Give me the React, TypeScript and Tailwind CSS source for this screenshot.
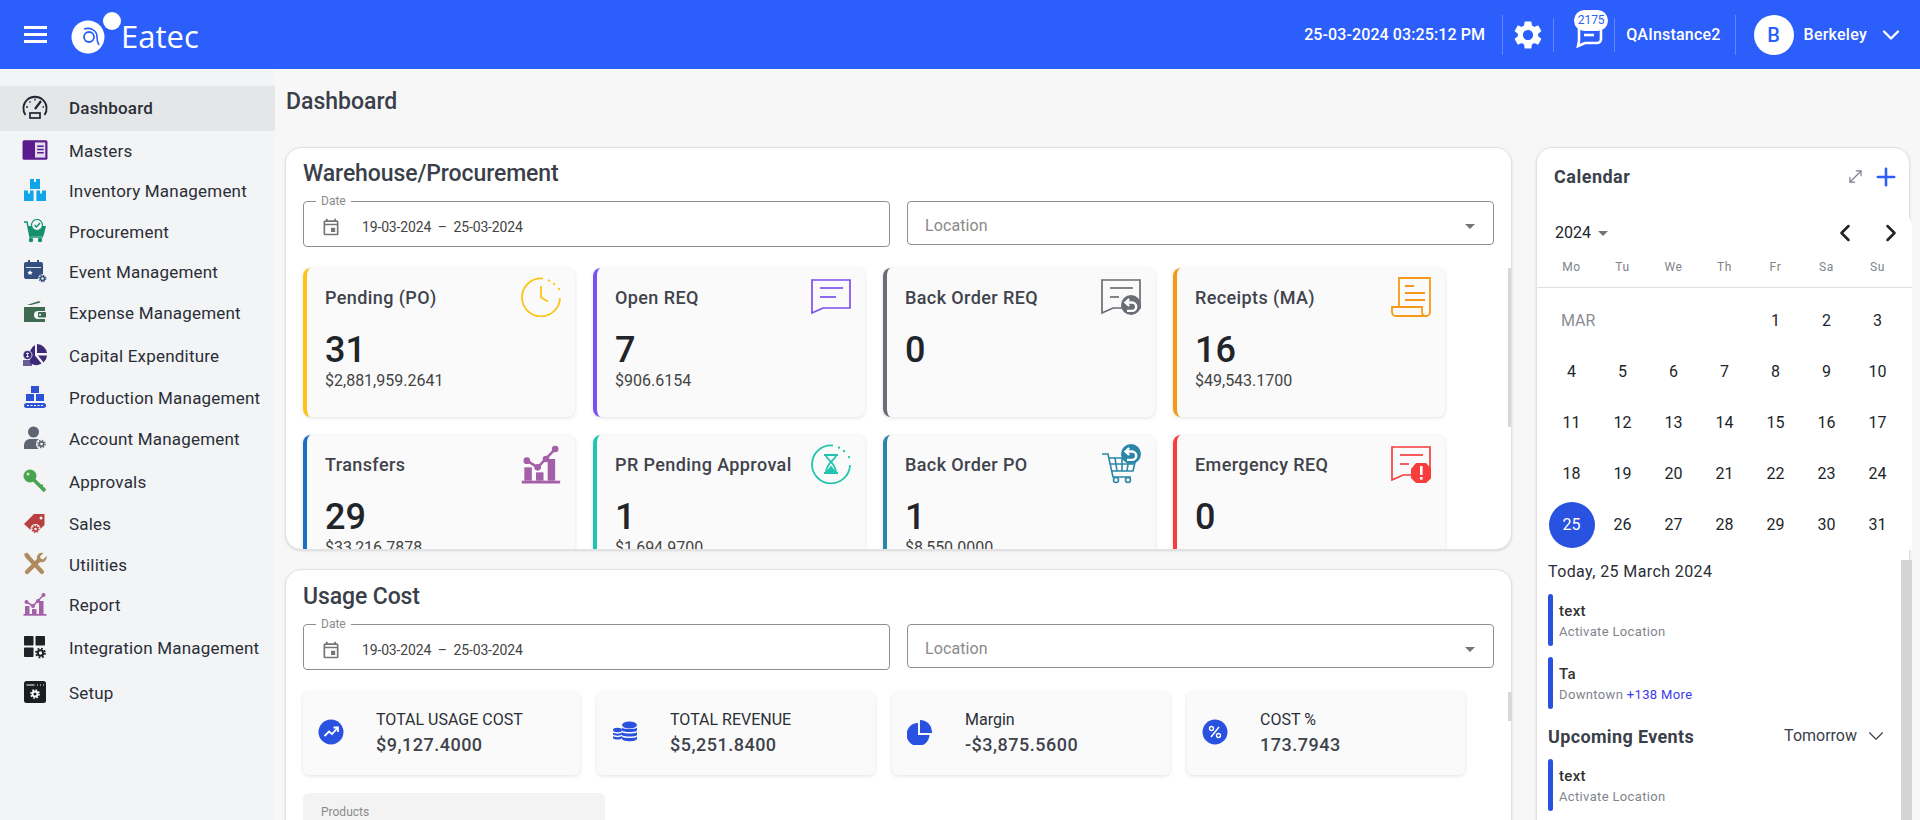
import React from 'react';
import { ChevronDown, ChevronLeft, ChevronRight, MoveDiagonal, Plus } from 'lucide-react';
import { MdOutlineEvent, MdSettings, MdArrowDropDown } from 'react-icons/md';

type IconProps = { className?: string };

const Gear = ({ cx, cy, r, color }: { cx: number; cy: number; r: number; color: string }) => {
  const ring = 2 * Math.PI * r * 0.9;
  return (
    <g fill="none" stroke={color}>
      <circle cx={cx} cy={cy} r={r * 0.9} strokeWidth={r * 0.36} strokeDasharray={`${ring / 16} ${ring / 16}`} />
      <circle cx={cx} cy={cy} r={r * 0.55} strokeWidth={r * 0.42} />
    </g>
  );
};

const UndoBadge = ({ cx, cy, r, color }: { cx: number; cy: number; r: number; color: string }) => (
  <g>
    <circle cx={cx} cy={cy} r={r} fill={color} />
    <path
      d={`M${cx - r * 0.5} ${cy - r * 0.25}h${r * 0.6}a${r * 0.42} ${r * 0.42} 0 0 1 0 ${r * 0.84}h${-r * 0.5}M${cx - r * 0.18} ${cy - r * 0.6}L${cx - r * 0.55} ${cy - r * 0.25}L${cx - r * 0.18} ${cy + r * 0.1}`}
      fill="none"
      stroke="#fff"
      strokeWidth={r * 0.24}
    />
  </g>
);

const ChartBars = ({ color }: { color: string }) => (
  <g fill={color}>
    <rect x="0.500" y="22" width="23" height="1.700" />
    <rect x="2" y="14" width="4.500" height="8" />
    <rect x="9" y="17" width="4.500" height="5" />
    <rect x="16" y="9" width="4.500" height="13" />
    <path d="M3.500 10L10 14L20 3.500" fill="none" stroke={color} strokeWidth="1.500" />
    <circle cx="3.500" cy="10" r="2" />
    <circle cx="10" cy="14" r="2" />
    <circle cx="15" cy="9" r="2" />
    <circle cx="20.500" cy="3" r="2" />
  </g>
);

const navIcons: Record<string, React.FC<IconProps>> = {
  gauge: ({ className }) => (
    <svg viewBox="0 0 26 24" className={className}>
      <path d="M3.500 20A11.600 11.600 0 1 1 22.500 20" fill="none" stroke="#1f2430" strokeWidth="1.800" />
      <path d="M13 14L19 6" stroke="#1f2430" strokeWidth="2.200" />
      <path d="M4 12h2M7.500 6.500l1 1M13 3.500v2M20.500 12h1.500" stroke="#1f2430" strokeWidth="1.400" />
      <rect x="8" y="18" width="10" height="5" fill="none" stroke="#1f2430" strokeWidth="1.700" />
    </svg>
  ),
  book: ({ className }) => (
    <svg viewBox="0 0 24 20" className={className}>
      <rect x="0.500" y="1" width="23" height="18" rx="1.500" fill="#5c1a8f" />
      <rect x="12" y="3" width="9.500" height="14" fill="#e3dcec" />
      <path d="M14 6.500h6M14 9.500h6M14 12.500h6" stroke="#5c1a8f" strokeWidth="1.300" />
    </svg>
  ),
  boxes: ({ className }) => (
    <svg viewBox="0 0 24 24" className={className} fill="#0ea5e9">
      <path d="M7 1h4v3h2V1h4v10H7z" />
      <path d="M1 12.500h4v3h2v-3h3.600V23H1z" />
      <path d="M13.400 12.500H17v3h2v-3h4V23h-9.600z" />
    </svg>
  ),
  cart: ({ className }) => (
    <svg viewBox="0 0 24 24" className={className}>
      <path d="M1 3h3l3 15h13" fill="none" stroke="#14906f" strokeWidth="1.400" />
      <path d="M5 7h18l-2.500 10H7z" fill="#14906f" />
      <circle cx="14" cy="6" r="5.500" fill="#f3f4f6" stroke="#14906f" strokeWidth="1.200" />
      <path d="M11.500 6l2 2 3.500-4" fill="none" stroke="#14906f" strokeWidth="1.500" />
      <circle cx="8" cy="21" r="2.200" fill="#14906f" />
      <circle cx="17" cy="21" r="2.200" fill="#14906f" />
    </svg>
  ),
  event: ({ className }) => (
    <svg viewBox="0 0 24 24" className={className}>
      <rect x="1" y="3" width="19" height="17" rx="2" fill="#33507f" />
      <rect x="3" y="8" width="15" height="10" fill="#dbe3f0" />
      <rect x="5" y="1" width="2" height="4" fill="#33507f" />
      <rect x="14" y="1" width="2" height="4" fill="#33507f" />
      <rect x="3" y="9" width="15" height="9" fill="#33507f" />
      <path d="M7 11l.9 1.700 1.900.2-1.400 1.300.4 1.800-1.800-.9-1.700.9.4-1.800-1.400-1.300 1.900-.2z" fill="#fff" />
      <circle cx="19.500" cy="19.500" r="4.300" fill="#f3f4f6" />
      <Gear cx={19.500} cy={19.500} r={3.600} color="#33507f" />
    </svg>
  ),
  wallet: ({ className }) => (
    <svg viewBox="0 0 24 24" className={className}>
      <path d="M4 5l12-4 1.500 1.500L8 5z" fill="#3e6b52" />
      <path d="M1 7h21v4H15a4 4 0 0 0 0 8h7v3H1z" fill="#3e6b52" />
      <rect x="15" y="12" width="8" height="5.500" rx="1" fill="#3e6b52" />
      <circle cx="17" cy="14.800" r="1" fill="#fff" />
    </svg>
  ),
  pie: ({ className }) => (
    <svg viewBox="0 0 26 24" className={className}>
      <path d="M15 1a10.500 10.500 0 0 1 10 9H15z" fill="#3c2a78" />
      <path d="M13 2v10.500l6.500 8A10.500 10.500 0 0 1 8 20V8a10.500 10.500 0 0 1 5-6z" fill="#3c2a78" />
      <path d="M16 12.500h9a10 10 0 0 1-3.500 7z" fill="#3c2a78" />
      <circle cx="5.500" cy="12" r="4.500" fill="#3c2a78" stroke="#f3f4f6" strokeWidth="0.800" />
      <path d="M4 10.500h3M4 13.500h3M5.500 9.500v5" stroke="#fff" strokeWidth="0.800" />
      <path d="M1 18h9M1 20h9M1 22h9" stroke="#3c2a78" strokeWidth="1.500" />
    </svg>
  ),
  production: ({ className }) => (
    <svg viewBox="0 0 24 24" className={className}>
      <rect x="8" y="1" width="8" height="7" fill="#2d52d8" />
      <rect x="3" y="9" width="8" height="7" fill="#2d52d8" />
      <rect x="13" y="9" width="8" height="7" fill="#2d52d8" />
      <rect x="1" y="18" width="22" height="5" rx="2.500" fill="#2d52d8" />
      <path d="M4 20.500h16" stroke="#fff" strokeWidth="1" strokeDasharray="2 1.500" />
    </svg>
  ),
  account: ({ className }) => (
    <svg viewBox="0 0 24 24" className={className}>
      <circle cx="10.500" cy="6" r="5.500" fill="#5e6470" />
      <path d="M1 23v-4a6 6 0 0 1 6-6h7a6 6 0 0 1 5 2l-4 8z" fill="#5e6470" />
      <circle cx="18.500" cy="18" r="5.500" fill="#f3f4f6" />
      <Gear cx={18.500} cy={18} r={4} color="#5e6470" />
    </svg>
  ),
  key: ({ className }) => (
    <svg viewBox="0 0 24 24" className={className}>
      <circle cx="7" cy="7" r="6.500" fill="#4aa34e" />
      <circle cx="5" cy="5" r="1.500" fill="#c9e8ca" />
      <path d="M10 10l12 12" stroke="#4aa34e" strokeWidth="3.500" />
      <path d="M17 17l3-1M20 20l2-1" stroke="#4aa34e" strokeWidth="1.500" />
    </svg>
  ),
  tag: ({ className }) => (
    <svg viewBox="0 0 24 24" className={className}>
      <path d="M1 13L11 3h10.500v11L12 23z" fill="#b84040" />
      <circle cx="18" cy="7" r="1.500" fill="#f3f4f6" />
      <circle cx="12.500" cy="18" r="5" fill="#f3f4f6" />
      <Gear cx={12.500} cy={18} r={3.800} color="#b84040" />
    </svg>
  ),
  tools: ({ className }) => (
    <svg viewBox="0 0 24 24" className={className}>
      <path d="M4 4l15 16" stroke="#ae8c60" strokeWidth="4.200" strokeLinecap="round" />
      <path d="M1 2l3-1.500 3 3-2 2-3-1z" fill="#ae8c60" />
      <path d="M4 20L16 8" stroke="#ae8c60" strokeWidth="4.400" strokeLinecap="round" />
      <path d="M14 7a5 5 0 0 1 6.500-6L17 4.500l.7 2.300 2.300.7 3.500-3.500A5 5 0 0 1 17 10z" fill="#ae8c60" />
    </svg>
  ),
  report: ({ className }) => (
    <svg viewBox="0 0 24 24" className={className}>
      <ChartBars color="#a45fa8" />
    </svg>
  ),
  integration: ({ className }) => (
    <svg viewBox="0 0 24 24" className={className}>
      <rect x="1" y="1" width="9.500" height="9.500" rx="0.800" fill="#1e2126" />
      <rect x="12.500" y="1" width="9.500" height="9.500" rx="0.800" fill="#1e2126" />
      <rect x="1" y="12.500" width="9.500" height="9.500" rx="0.800" fill="#1e2126" />
      <Gear cx={17.500} cy={18} r={5} color="#1e2126" />
    </svg>
  ),
  setup: ({ className }) => (
    <svg viewBox="0 0 24 24" className={className}>
      <rect x="1" y="1" width="22" height="22" rx="2.500" fill="#1b1d22" />
      <path d="M3.500 5h8M14 5h1M17 5h1M20 5h1" stroke="#fff" strokeWidth="1.200" />
      <Gear cx={12} cy={14} r={4.500} color="#fff" />
    </svg>
  ),
};

const navItems = [
  { label: 'Dashboard', icon: 'gauge', size: 'h-[45px]', active: true },
  { label: 'Masters', icon: 'book', size: 'h-[40px]' },
  { label: 'Inventory Management', icon: 'boxes', size: 'h-[40px]' },
  { label: 'Procurement', icon: 'cart', size: 'h-[42px]' },
  { label: 'Event Management', icon: 'event', size: 'h-[38px]' },
  { label: 'Expense Management', icon: 'wallet', size: 'h-[44px]' },
  { label: 'Capital Expenditure', icon: 'pie', size: 'h-[42px]' },
  { label: 'Production Management', icon: 'production', size: 'h-[42px]' },
  { label: 'Account Management', icon: 'account', size: 'h-[40px]' },
  { label: 'Approvals', icon: 'key', size: 'h-[46px]' },
  { label: 'Sales', icon: 'tag', size: 'h-[38px]' },
  { label: 'Utilities', icon: 'tools', size: 'h-[44px]' },
  { label: 'Report', icon: 'report', size: 'h-[36px]' },
  { label: 'Integration Management', icon: 'integration', size: 'h-[50px]' },
  { label: 'Setup', icon: 'setup', size: 'h-[40px]' },
];

const ChatShape = ({ color, lines = 2 }: { color: string; lines?: number }) => (
  <g fill="none" stroke={color} strokeWidth="1.700">
    <path d="M1 3h38v28H12l-11 5z" />
    <path d="M9 11h23" />
    <path d={lines === 2 ? 'M9 20h16' : 'M9 20h9'} />
  </g>
);

const statIcons: Record<string, React.ReactNode> = {
  clock: (
    <svg viewBox="0 0 40 40" className="w-10 h-10" fill="none" stroke="#fcc419" strokeWidth="1.800">
      <path d="M22 1.500A19 19 0 1 0 39 21" />
      <path d="M20 9v11.500l7 4" strokeWidth="1.800" />
      <path d="M28 3.500l.1.1M33 7l.1.1M38 12l.1.1" strokeWidth="2.200" strokeLinecap="round" />
    </svg>
  ),
  chat: (
    <svg viewBox="0 0 40 40" className="w-10 h-10">
      <ChatShape color="#7b4ff0" />
    </svg>
  ),
  backChat: (
    <svg viewBox="0 0 40 40" className="w-10 h-10">
      <ChatShape color="#6b6d76" lines={1} />
      <UndoBadge cx={30} cy={28} r={10} color="#6b6d76" />
    </svg>
  ),
  receipt: (
    <svg viewBox="0 0 40 40" className="w-10 h-10" fill="none" stroke="#f59a16" strokeWidth="1.800">
      <path d="M8 30V1h31v34a4 4 0 0 1-8 0v-5H1v5a4 4 0 0 0 4 4h30" />
      <path d="M14 9h9M14 16h20M14 23h20" strokeWidth="2.200" />
    </svg>
  ),
  transfers: (
    <svg viewBox="0 0 24 24" className="w-10 h-10">
      <ChartBars color="#a45fa8" />
    </svg>
  ),
  hourglass: (
    <svg viewBox="0 0 40 40" className="w-10 h-10" fill="none" stroke="#21c4ae" strokeWidth="1.800">
      <path d="M22 1.500A19 19 0 1 0 39 21" />
      <path d="M13 11h14M13 29h14" strokeWidth="2.200" />
      <path d="M15 11c0 5 10 7 10 18M25 11c0 5-10 7-10 18" strokeWidth="1.800" />
      <path d="M16 28l4-5 4 5z" fill="#21c4ae" />
      <path d="M28 3.500l.1.1M33 7l.1.1M38 13l.1.1" strokeWidth="2.200" strokeLinecap="round" />
    </svg>
  ),
  backCart: (
    <svg viewBox="0 0 40 40" className="w-10 h-10">
      <g fill="none" stroke="#2a86a6" strokeWidth="1.600">
        <path d="M1 10h6l5 23h18" />
        <path d="M8 14h27l-3 13H11" />
        <path d="M14 14l2 13M21 14v13M28 14l-2 13M10 20h24" />
        <circle cx="15" cy="36" r="2.500" />
        <circle cx="27" cy="36" r="2.500" />
      </g>
      <UndoBadge cx={30} cy={10} r={10} color="#2a86a6" />
    </svg>
  ),
  alert: (
    <svg viewBox="0 0 40 40" className="w-10 h-10">
      <ChatShape color="#f83d3d" lines={1} />
      <path d="M25 19h10l5.500 6v9l-5.500 5H25l-5-5v-9z" fill="#f83d3d" />
      <rect x="29" y="22" width="2.600" height="9" fill="#fff" />
      <rect x="29" y="33" width="2.600" height="2.600" fill="#fff" />
    </svg>
  ),
};

const warehouseStats = [
  { label: 'Pending (PO)', value: '31', amount: '$2,881,959.2641', icon: 'clock', bar: 'border-l-[#fcc419]' },
  { label: 'Open REQ', value: '7', amount: '$906.6154', icon: 'chat', bar: 'border-l-[#7b4ff0]' },
  { label: 'Back Order REQ', value: '0', amount: '', icon: 'backChat', bar: 'border-l-[#6b6d76]' },
  { label: 'Receipts (MA)', value: '16', amount: '$49,543.1700', icon: 'receipt', bar: 'border-l-[#f59a16]' },
  { label: 'Transfers', value: '29', amount: '$33,216.7878', icon: 'transfers', bar: 'border-l-[#1b6fc0]' },
  { label: 'PR Pending Approval', value: '1', amount: '$1,694.9700', icon: 'hourglass', bar: 'border-l-[#21c4ae]' },
  { label: 'Back Order PO', value: '1', amount: '$8,550.0000', icon: 'backCart', bar: 'border-l-[#2a86a6]' },
  { label: 'Emergency REQ', value: '0', amount: '', icon: 'alert', bar: 'border-l-[#f83d3d]' },
];

const summaryIcons: Record<string, React.ReactNode> = {
  trend: (
    <svg viewBox="0 0 26 26" className="w-[26px] h-[26px]">
      <circle cx="13" cy="13" r="12.500" fill="#2a52e0" />
      <path d="M6.500 17l4.500-4.500 3 2.500 5.500-6M15.500 8.500h4.500V13" fill="none" stroke="#fff" strokeWidth="1.800" />
    </svg>
  ),
  coins: (
    <svg viewBox="0 0 26 26" className="w-[26px] h-[26px]" fill="#2a52e0">
      <ellipse cx="17.500" cy="6" rx="7.500" ry="3.500" />
      <path d="M10 8.500c1 2 14 2 15 0v3c-1 2-14 2-15 0zM10 13c1 2 14 2 15 0v3c-1 2-14 2-15 0zM10 17.500c1 2 14 2 15 0v2.500c-1 3-14 3-15 0z" />
      <ellipse cx="5.500" cy="11" rx="4.500" ry="2.200" />
      <path d="M1 13.500c1 1.500 8 1.500 9 0v2c-1 1.500-8 1.500-9 0zM1 17c1 1.500 8 1.500 9 0v2c-1 2-8 2-9 0z" />
    </svg>
  ),
  pie: (
    <svg viewBox="0 0 26 26" className="w-[26px] h-[26px]" fill="#2a52e0">
      <path d="M11 4v12h11.500A11.500 11.500 0 1 1 11 4z" />
      <path d="M13 1a12 12 0 0 1 12 13H13z" />
    </svg>
  ),
  percent: (
    <svg viewBox="0 0 26 26" className="w-[26px] h-[26px]">
      <circle cx="13" cy="13" r="12.500" fill="#2a52e0" />
      <path d="M17 8l-8 10" stroke="#fff" strokeWidth="1.500" />
      <circle cx="9.500" cy="9.500" r="2" fill="none" stroke="#fff" strokeWidth="1.300" />
      <circle cx="16.500" cy="16.500" r="2" fill="none" stroke="#fff" strokeWidth="1.300" />
    </svg>
  ),
};

const usageStats = [
  { label: 'TOTAL USAGE COST', value: '$9,127.4000', icon: 'trend' },
  { label: 'TOTAL REVENUE', value: '$5,251.8400', icon: 'coins' },
  { label: 'Margin', value: '-$3,875.5600', icon: 'pie' },
  { label: 'COST %', value: '173.7943', icon: 'percent' },
];

const weekDays = ['Mo', 'Tu', 'We', 'Th', 'Fr', 'Sa', 'Su'];
const marchDays = Array.from({ length: 31 }, (_, i) => i + 1);

const Filters = () => (
  <div className="flex items-start gap-[17px]">
    <div className="relative w-[587px] h-[46px] border border-[#8e8e8e] rounded-[4px] flex items-center pl-[17px] pt-[6px]">
      <span className="absolute -top-[9px] left-[12px] bg-white px-[5px] text-[12px] leading-[16px] text-[#8a8a8a]">Date</span>
      <MdOutlineEvent className="w-5 h-5 text-[#757575]" />
      <span className="ml-[21px] text-[14px] text-[#444] tracking-[-0.15px] whitespace-pre">19-03-2024  –  25-03-2024</span>
    </div>
    <div className="w-[587px] h-[44px] border border-[#8e8e8e] rounded-[4px] flex items-center justify-between pl-[17px] pr-[11px] pt-[5px]">
      <span className="text-[16px] text-[#8a8a8a] tracking-[0.1px]">Location</span>
      <MdArrowDropDown className="w-6 h-6 text-[#757575]" />
    </div>
  </div>
);

const EventRow = ({ title, children }: { title: string; children: React.ReactNode }) => (
  <div className="h-[52px] flex">
    <div className="w-[5px] bg-[#2a52e0] rounded-[3px]" />
    <div className="pl-[6px] pt-[7px]">
      <div className="text-[15px] leading-[20px] font-medium text-[#333] tracking-[0.3px]">{title}</div>
      <div className="text-[13px] leading-[20px] mt-[1px] text-[#80848c] tracking-[0.35px]">{children}</div>
    </div>
  </div>
);

const App: React.FC = () => {
  return (
    <div className="w-[1920px] h-[820px] overflow-hidden flex flex-col bg-[#f7f7f7] font-['Roboto',sans-serif] text-[#212529]">
      <header className="h-[69px] shrink-0 bg-[#2c5efb] flex items-center text-white">
        <div className="ml-[24px] w-[23px] flex flex-col gap-[4.5px]">
          <span className="h-[2.5px] bg-white" />
          <span className="h-[2.5px] bg-white" />
          <span className="h-[2.5px] bg-white" />
        </div>
        <svg viewBox="0 0 54 44" className="w-[54px] h-[44px] ml-[24px] -mt-[5px]">
          <circle cx="17" cy="27" r="16.500" fill="#fff" />
          <circle cx="41" cy="11" r="9" fill="#fff" />
          <circle cx="18" cy="27" r="5" fill="none" stroke="#2c5efb" strokeWidth="1.800" />
          <path d="M13 19C19 17 26 20 26 27C26 30 26 32 28 35" fill="none" stroke="#2c5efb" strokeWidth="1.600" />
        </svg>
        <span className="ml-[-4px] mt-[4px] text-[31px] font-normal font-['Open_Sans',sans-serif] leading-none">Eatec</span>

        <div className="ml-auto flex items-center pr-[15px]">
          <span className="text-[16px] font-medium tracking-[0.1px] mr-[17px]">25-03-2024 03:25:12 PM</span>
          <span className="w-px h-[40px] bg-white/25" />
          <MdSettings className="w-[34px] h-[34px] mx-[8px]" />
          <span className="w-px h-[34px] bg-white/25" />
          <div className="relative w-[60px] h-[34px] flex items-center justify-center">
            <svg viewBox="0 0 28 28" className="w-[28px] h-[28px] ml-[10px]" fill="none" stroke="#fff" strokeWidth="2.600">
              <path d="M6 6h16a4 4 0 0 1 4 4v8a4 4 0 0 1-4 4H10l-7 3 1-5V8z" />
              <path d="M9 14h10" />
            </svg>
            <span className="absolute -top-[8px] left-[20px] w-[34px] h-[21px] rounded-full bg-white text-[#2c5efb] text-[12px] leading-[21px] text-center">2175</span>
          </div>
          <span className="w-px h-[34px] bg-white/25" />
          <span className="ml-[11px] mr-[14px] text-[16px] font-medium tracking-[0.2px]">QAInstance2</span>
          <span className="w-px h-[40px] bg-white/25" />
          <span className="ml-[18px] w-[40px] h-[40px] rounded-full bg-white text-[#2c5efb] font-medium text-[20px] flex items-center justify-center">B</span>
          <span className="ml-[10px] text-[16px] font-medium tracking-[0.25px]">Berkeley</span>
          <ChevronDown className="ml-[10px] w-[28px] h-[28px]" strokeWidth={2} />
        </div>
      </header>

      <div className="flex flex-1 min-h-0">
        <aside className="w-[275px] shrink-0 bg-[#f3f4f6] pt-[17px]">
          {navItems.map((item) => {
            const Icon = navIcons[item.icon];
            return (
              <div key={item.label} className={`${item.size} flex items-center pl-[22px] ${item.active ? 'bg-[#e5e6e8]' : 'pt-[2px]'}`}>
                <Icon className="w-[26px] h-[24px] -mt-[4px]" />
                <span className={`ml-[21px] text-[17px] tracking-[0.2px] text-[#2a2e36] ${item.active ? 'font-medium' : ''}`}>{item.label}</span>
              </div>
            );
          })}
        </aside>

        <main className="flex-1 min-w-0 pl-[10px]">
          <h1 className="h-[78px] pt-[19px] pl-px text-[23px] leading-[28px] font-medium text-[#3a3f4a]">Dashboard</h1>
          <div className="flex gap-[24px]">
            <div className="w-[1227px] flex flex-col gap-[19px]">
              <section className="h-[403px] bg-white border border-[#e2e2e2] rounded-[16px] shadow-sm overflow-hidden pt-[11px] pl-[17px] flex flex-col">
                <h2 className="h-[30px] mb-[12px] text-[23px] leading-[30px] font-medium text-[#3a3f4a] tracking-[-0.1px]">Warehouse/Procurement</h2>
                <Filters />
                <div className="relative mt-[21px] flex-1 min-h-0">
                  <div className="grid grid-cols-[repeat(4,272px)] gap-x-[18px] gap-y-[18px]">
                    {warehouseStats.map((stat) => (
                      <div key={stat.label} className={`relative h-[149px] bg-[#fafafa] rounded-[8px] border-l-4 ${stat.bar} shadow-[0_1px_4px_rgba(0,0,0,0.12)] pl-[18px] pt-[18px]`}>
                        <div className="text-[18px] leading-[24px] font-medium text-[#3f434c] tracking-[0.4px]">{stat.label}</div>
                        <div className="mt-[20px] text-[36px] leading-[40px] font-medium text-[#212529]">{stat.value}</div>
                        <div className="mt-[1px] text-[16px] leading-[20px] text-[#444]">{stat.amount}</div>
                        <div className="absolute top-[9px] right-[14px]">{statIcons[stat.icon]}</div>
                      </div>
                    ))}
                  </div>
                  <div className="absolute top-0 left-[1205px] w-[4px] h-[159px] bg-[#d8d8d8]" />
                </div>
              </section>

              <section className="relative h-[300px] bg-white border border-[#e2e2e2] rounded-[16px] shadow-sm pt-[12px] pl-[17px]">
                <h2 className="h-[30px] mb-[12px] text-[23px] leading-[30px] font-medium text-[#3a3f4a] tracking-[-0.1px]">Usage Cost</h2>
                <Filters />
                <div className="relative mt-[22px]">
                  <div className="grid grid-cols-[277px_278px_278px_278px] gap-x-[17px]">
                    {usageStats.map((stat) => (
                      <div key={stat.label} className="h-[83px] bg-[#fafafa] rounded-[6px] shadow-[0_1px_4px_rgba(0,0,0,0.12)] flex items-center pl-[15px]">
                        <div className="w-[26px] h-[26px] -mt-[4px]">{summaryIcons[stat.icon]}</div>
                        <div className="ml-[32px] -mt-[2px]">
                          <div className="text-[16px] leading-[24px] text-[#2a2e36]">{stat.label}</div>
                          <div className="text-[18px] leading-[26px] font-medium text-[#3f434c] tracking-[0.5px]">{stat.value}</div>
                        </div>
                      </div>
                    ))}
                  </div>
                  <div className="absolute top-0 left-[1205px] w-[4px] h-[29px] bg-[#d8d8d8]" />
                </div>
                <div className="mt-[18px] w-[302px] h-[60px] bg-[#f3f3f3] rounded-[6px] pl-[18px] pt-[11px] text-[12px] leading-[16px] text-[#8a8a8a]">Products</div>
              </section>
            </div>

            <section className="relative w-[374px] h-[700px] bg-white border border-[#e2e2e2] rounded-[16px] shadow-sm">
              <div className="flex items-center justify-between pt-[17px] pl-[17px] pr-[9px] h-[40px]">
                <h3 className="text-[18px] leading-[24px] font-bold text-[#3a3f4a] tracking-[0.5px]">Calendar</h3>
                <div className="flex items-center gap-[7px]">
                  <MoveDiagonal className="w-[19px] h-[19px] text-[#7b7f8a]" strokeWidth={1.5} />
                  <Plus className="w-[28px] h-[28px] text-[#2c5efb]" strokeWidth={2.2} />
                </div>
              </div>

              <div className="relative mt-[27px] -mr-[3px] pl-[9px] bg-white rounded-tr-[10px]">
                <div className="flex items-center justify-between h-[34px] pl-[9px] pr-[7px] pt-[2px]">
                  <div className="flex items-center">
                    <span className="text-[16px] text-[#212529]">2024</span>
                    <MdArrowDropDown className="w-6 h-6 text-[#757575]" />
                  </div>
                  <div className="flex items-center gap-[18px] text-[#212529]">
                    <ChevronLeft className="w-[28px] h-[28px]" strokeWidth={2.2} />
                    <ChevronRight className="w-[28px] h-[28px]" strokeWidth={2.2} />
                  </div>
                </div>
                <div className="grid grid-cols-[repeat(7,51px)] h-[38px] items-center pb-[2px]">
                  {weekDays.map((day) => (
                    <span key={day} className="text-center text-[12px] text-[#7f8389] tracking-[0.7px]">{day}</span>
                  ))}
                </div>
                <div className="-ml-[9px] h-px bg-[#dfdfdf]" />
                <div className="grid grid-cols-[repeat(7,51px)] auto-rows-[51px] mt-[7px] items-center justify-items-center text-[16px] text-[#212529]">
                  <span className="col-span-4 justify-self-start pl-[15px] text-[#8a8d93]">MAR</span>
                  {marchDays.map((day) =>
                    day === 25 ? (
                      <span key={day} className="w-[46px] h-[46px] rounded-full bg-[#2a52e0] text-white flex items-center justify-center">{day}</span>
                    ) : (
                      <span key={day}>{day}</span>
                    ),
                  )}
                </div>
              </div>

              <div className="pl-[11px] pr-[20px]">
                <div className="mt-[10px] text-[16px] leading-[24px] text-[#2a2e36] tracking-[0.4px]">Today, 25 March 2024</div>
                <div className="mt-[10px] flex flex-col gap-[11px]">
                  <EventRow title="text">Activate Location</EventRow>
                  <EventRow title="Ta">
                    Downtown <span className="text-[#3b3bf0]">+138 More</span>
                  </EventRow>
                </div>
                <div className="mt-[13px] h-[28px] flex items-center justify-between">
                  <h4 className="text-[18px] font-bold text-[#3a3f4a] tracking-[0.35px]">Upcoming Events</h4>
                  <div className="flex items-center text-[16px] text-[#3a3f4a]">
                    Tomorrow
                    <ChevronDown className="ml-[6px] w-[26px] h-[26px]" strokeWidth={1} />
                  </div>
                </div>
                <div className="mt-[9px]">
                  <EventRow title="text">Activate Location</EventRow>
                </div>
              </div>
              <div className="absolute top-[412px] -right-[3px] w-[11px] h-[288px] bg-[#d4d4d4]" />
            </section>
          </div>
        </main>
      </div>
    </div>
  );
};

export default App;
